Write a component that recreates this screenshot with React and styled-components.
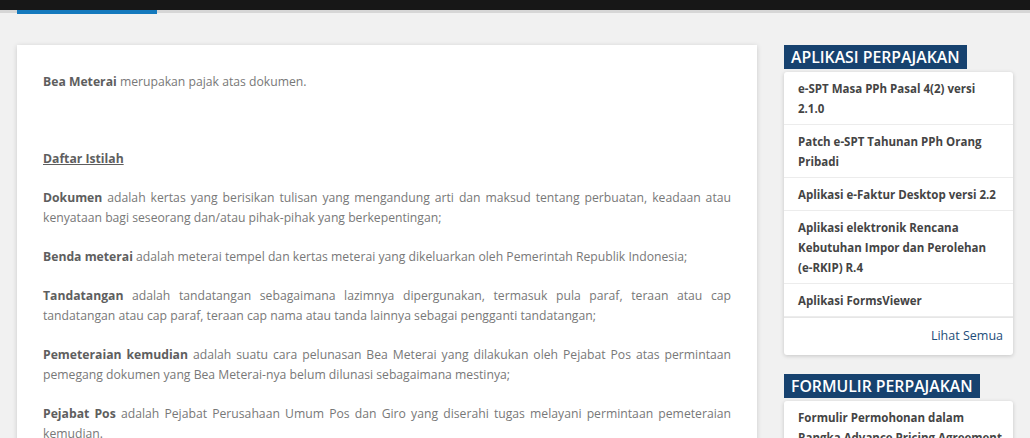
import React from 'react';
import styled, { createGlobalStyle } from 'styled-components';

const GlobalStyle = createGlobalStyle`
  html, body {
    margin: 0;
    padding: 0;
    background: #f1f1f1;
    font-family: "Open Sans", "Liberation Sans", sans-serif;
    overflow: hidden;
  }
`

const TopBar = styled.div`
  height: 10px;
  background: #171717;
`

const TabStrip = styled.div`
  height: 3px;
  background: #d6d6d6;
  padding-left: 17px;
`

const ActiveTab = styled.div`
  width: 140px;
  height: 4px;
  background: #1479bd;
`

const Page = styled.div`
  display: flex;
  align-items: flex-start;
  gap: 27px;
  padding: 32px 17px 0 17px;
`

const Article = styled.div`
  width: 740px;
  flex-shrink: 0;
  background: #fff;
  box-shadow: 0 1px 5px rgba(0, 0, 0, 0.16);
  padding: 27px 26px 20px 26px;
  box-sizing: border-box;
`

const Para = styled.p`
  margin: 0 0 19px 0;
  font-size: 12.2px;
  line-height: 20px;
  color: #787878;
  text-align: justify;

  b {
    color: #5e5e5e;
    font-weight: 700;
  }
`

const Spacer = styled.div`
  height: ${p => p.h}px;
`

const Underlined = styled.b`
  text-decoration: underline;
`

const Sidebar = styled.div`
  width: 229px;
  flex-shrink: 0;
  display: flex;
  flex-direction: column;
`

const WidgetTitle = styled.div`
  align-self: flex-start;
  background: #17426f;
  color: #fff;
  font-size: 15.8px;
  font-weight: 600;
  line-height: 24px;
  padding: 0 7px;
  margin-bottom: 3px;
  margin-top: ${p => p.$top || 0}px;
`

const WidgetCard = styled.div`
  background: #fff;
  border-radius: 3px;
  box-shadow: 0 1px 4px rgba(0, 0, 0, 0.18);
`

const Item = styled.div`
  padding: 7px ${p => p.$pr || 12}px 5px 14px;
  font-size: 11.5px;
  font-weight: 700;
  line-height: 20px;
  color: #444;
  border-bottom: 1px solid #ececec;
`

const MoreRow = styled.div`
  border-top: 1px solid #e6e6e6;
  padding: 8px 10px 9px 14px;
  text-align: right;
  font-size: 12.5px;
  line-height: 20px;
  color: #1d4d7a;
`

const apps = [
  'e-SPT Masa PPh Pasal 4(2) versi 2.1.0',
  'Patch e-SPT Tahunan PPh Orang Pribadi',
  'Aplikasi e-Faktur Desktop versi 2.2',
  'Aplikasi elektronik Rencana Kebutuhan Impor dan Perolehan (e-RKIP) R.4',
  'Aplikasi FormsViewer',
]

const forms = [
  'Formulir Permohonan dalam Rangka Advance Pricing Agreement',
]

const App = () => {
  return (
    <>
      <GlobalStyle />
      <TopBar />
      <TabStrip>
        <ActiveTab />
      </TabStrip>
      <Page>
        <Article>
          <Para><b>Bea Meterai</b> merupakan pajak atas dokumen.</Para>
          <Spacer h={38} />
          <Para><Underlined>Daftar Istilah</Underlined></Para>
          <Para>
            <b>Dokumen</b> adalah kertas yang berisikan tulisan yang mengandung arti dan maksud tentang perbuatan, keadaan atau kenyataan bagi seseorang dan/atau pihak-pihak yang berkepentingan;
          </Para>
          <Para>
            <b>Benda meterai</b> adalah meterai tempel dan kertas meterai yang dikeluarkan oleh Pemerintah Republik Indonesia;
          </Para>
          <Para>
            <b>Tandatangan</b> adalah tandatangan sebagaimana lazimnya dipergunakan, termasuk pula paraf, teraan atau cap tandatangan atau cap paraf, teraan cap nama atau tanda lainnya sebagai pengganti tandatangan;
          </Para>
          <Para>
            <b>Pemeteraian kemudian</b> adalah suatu cara pelunasan Bea Meterai yang dilakukan oleh Pejabat Pos atas permintaan pemegang dokumen yang Bea Meterai-nya belum dilunasi sebagaimana mestinya;
          </Para>
          <Para>
            <b>Pejabat Pos</b> adalah Pejabat Perusahaan Umum Pos dan Giro yang diserahi tugas melayani permintaan pemeteraian kemudian.
          </Para>
        </Article>
        <Sidebar>
          <WidgetTitle>APLIKASI PERPAJAKAN</WidgetTitle>
          <WidgetCard>
            {apps.map(a => <Item key={a}>{a}</Item>)}
            <MoreRow>Lihat Semua</MoreRow>
          </WidgetCard>
          <WidgetTitle $top={19}>FORMULIR PERPAJAKAN</WidgetTitle>
          <WidgetCard>
            {forms.map(a => <Item key={a} $pr={6}>{a}</Item>)}
          </WidgetCard>
        </Sidebar>
      </Page>
    </>
  );
};

export default App;
